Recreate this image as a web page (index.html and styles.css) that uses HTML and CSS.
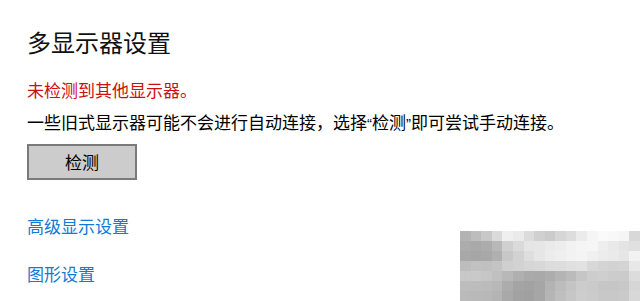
FILE: index.html
```html
<!DOCTYPE html>
<html lang="zh-CN">
<head>
<meta charset="utf-8">
<title>多显示器设置</title>
<link rel="stylesheet" href="styles.css">
</head>
<body>
<main class="page">
  <h1 class="title">多显示器设置</h1>
  <p class="error">未检测到其他显示器。</p>
  <p class="desc">一些旧式显示器可能不会进行自动连接，选择<span class="q">“</span>检测<span class="q">”</span>即可尝试手动连接。</p>
  <button class="btn" type="button">检测</button>
  <a class="link first" href="#">高级显示设置</a>
  <a class="link second" href="#">图形设置</a>
</main>
<div class="mosaic" aria-hidden="true">
  <i style="background:#b3b3b3"></i><i style="background:#bdbdbd"></i><i style="background:#c8c8c8"></i><i style="background:#dadada"></i><i style="background:#efefef"></i><i style="background:#eaeaea"></i><i style="background:#dcdcdc"></i><i style="background:#d0d0d0"></i><i style="background:#cbcbcb"></i><i style="background:#d6d6d6"></i><i style="background:#dddddd"></i><i style="background:#ebebeb"></i><i style="background:#f5f5f5"></i><i style="background:#fafafa"></i><i style="background:#f8f8f8"></i><i style="background:#f5f5f5"></i><i style="background:#d8d8d8"></i>
  <i style="background:#acacac"></i><i style="background:#a9a9a9"></i><i style="background:#acacac"></i><i style="background:#b8b8b8"></i><i style="background:#d0d0d0"></i><i style="background:#dadada"></i><i style="background:#e5e5e5"></i><i style="background:#e6e6e6"></i><i style="background:#eaeaea"></i><i style="background:#ededed"></i><i style="background:#f2f2f2"></i><i style="background:#f5f5f5"></i><i style="background:#f6f6f6"></i><i style="background:#eeeeee"></i><i style="background:#e9e9e9"></i><i style="background:#e4e4e4"></i><i style="background:#e0e0e0"></i>
  <i style="background:#a8a8a8"></i><i style="background:#a6a6a6"></i><i style="background:#a8a8a8"></i><i style="background:#b0b0b0"></i><i style="background:#c8c8c8"></i><i style="background:#d2d2d2"></i><i style="background:#dedede"></i><i style="background:#e6e6e6"></i><i style="background:#ececec"></i><i style="background:#efefef"></i><i style="background:#f2f2f2"></i><i style="background:#f4f4f4"></i><i style="background:#f0f0f0"></i><i style="background:#ececec"></i><i style="background:#eaeaea"></i><i style="background:#e6e6e6"></i><i style="background:#f2f2f2"></i>
  <i style="background:#bdbdbd"></i><i style="background:#c1c1c1"></i><i style="background:#c0c0c0"></i><i style="background:#c4c4c4"></i><i style="background:#cfcfcf"></i><i style="background:#d2d2d2"></i><i style="background:#d6d6d6"></i><i style="background:#d8d8d8"></i><i style="background:#dcdcdc"></i><i style="background:#dddddd"></i><i style="background:#e0e0e0"></i><i style="background:#e2e2e2"></i><i style="background:#d8d8d8"></i><i style="background:#d4d4d4"></i><i style="background:#d2d2d2"></i><i style="background:#d4d4d4"></i><i style="background:#e8e8e8"></i>
  <i style="background:#c8c8c8"></i><i style="background:#c9c9c9"></i><i style="background:#c6c6c6"></i><i style="background:#c0c0c0"></i><i style="background:#b8b8b8"></i><i style="background:#b0b0b0"></i><i style="background:#aaaaaa"></i><i style="background:#a9a9a9"></i><i style="background:#adadad"></i><i style="background:#b4b4b4"></i><i style="background:#bbbbbb"></i><i style="background:#c6c6c6"></i><i style="background:#cdcdcd"></i><i style="background:#cfcfcf"></i><i style="background:#cccccc"></i><i style="background:#cbcbcb"></i><i style="background:#dcdcdc"></i>
  <i style="background:#bdbdbd"></i><i style="background:#bcbcbc"></i><i style="background:#bbbbbb"></i><i style="background:#b8b8b8"></i><i style="background:#acacac"></i><i style="background:#a4a4a4"></i><i style="background:#a2a2a2"></i><i style="background:#a6a6a6"></i><i style="background:#b3b3b3"></i><i style="background:#bcbcbc"></i><i style="background:#c4c4c4"></i><i style="background:#cccccc"></i><i style="background:#cacaca"></i><i style="background:#c6c6c6"></i><i style="background:#c6c6c6"></i><i style="background:#c8c8c8"></i><i style="background:#d6d6d6"></i>
  <i style="background:#bababa"></i><i style="background:#b9b9b9"></i><i style="background:#b8b8b8"></i><i style="background:#b4b4b4"></i><i style="background:#a9a9a9"></i><i style="background:#a2a2a2"></i><i style="background:#a0a0a0"></i><i style="background:#a6a6a6"></i><i style="background:#b5b5b5"></i><i style="background:#bfbfbf"></i><i style="background:#c6c6c6"></i><i style="background:#cdcdcd"></i><i style="background:#cbcbcb"></i><i style="background:#c8c8c8"></i><i style="background:#c8c8c8"></i><i style="background:#cacaca"></i><i style="background:#d8d8d8"></i>
</div>
</body>
</html>
```

FILE: styles.css
```css
html, body {
  margin: 0;
  padding: 0;
  background: #ffffff;
}

body {
  width: 640px;
  height: 301px;
  overflow: hidden;
  position: relative;
  font-family: "Noto Sans CJK SC", "Noto Sans", sans-serif;
}

.page {
  display: flex;
  flex-direction: column;
  align-items: flex-start;
  padding: 26px 0 0 27px;
}

.title {
  margin: 0;
  font-size: 24px;
  line-height: 32px;
  font-weight: 400;
  color: #111111;
}

.error {
  margin: 20px 0 0;
  font-size: 17px;
  line-height: 24px;
  color: #cc1010;
}

.desc {
  margin: 8px 0 0;
  font-size: 17px;
  line-height: 24px;
  color: #000000;
}

.q {
  font-family: "Liberation Sans", sans-serif;
  font-size: 15px;
}

.btn {
  margin-top: 8px;
  width: 110px;
  height: 36px;
  padding: 0;
  border: 2px solid #7a7a7a;
  background: #cccccc;
  font-family: inherit;
  font-size: 17px;
  line-height: 24px;
  color: #000000;
}

.link {
  font-size: 17px;
  line-height: 24px;
  color: #1279d6;
  text-decoration: none;
}

.link.first {
  margin-top: 34px;
}

.link.second {
  margin-top: 24px;
}

.mosaic {
  position: absolute;
  left: 460px;
  top: 231px;
  width: 180px;
  height: 70px;
  display: grid;
  grid-template-columns: repeat(17, 1fr);
  grid-auto-rows: 10px;
  overflow: hidden;
}

.mosaic i {
  display: block;
}
```
